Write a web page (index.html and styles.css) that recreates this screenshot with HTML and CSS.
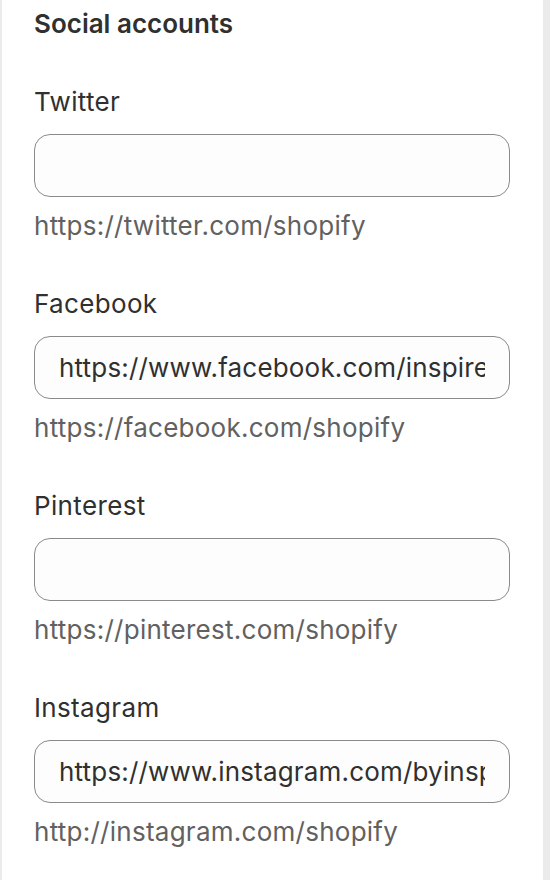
FILE: index.html
```html
<!DOCTYPE html>
<html lang="en">
<head>
<meta charset="utf-8">
<title>Social accounts</title>
<link rel="stylesheet" href="styles.css">
</head>
<body>
<div class="card">
  <h2 class="card-title">Social accounts</h2>
  <div class="fields">
    <div class="field">
      <label class="field-label" for="tw">Twitter</label>
      <input class="field-input" id="tw" type="text" value="">
      <div class="field-help">https://twitter.com/shopify</div>
    </div>
    <div class="field">
      <label class="field-label" for="fb">Facebook</label>
      <input class="field-input" id="fb" type="text" value="https://www.facebook.com/inspiredbyshopify">
      <div class="field-help">https://facebook.com/shopify</div>
    </div>
    <div class="field">
      <label class="field-label" for="pi">Pinterest</label>
      <input class="field-input" id="pi" type="text" value="">
      <div class="field-help">https://pinterest.com/shopify</div>
    </div>
    <div class="field">
      <label class="field-label" for="ig">Instagram</label>
      <input class="field-input" id="ig" type="text" value="https://www.instagram.com/byinspiredshopify">
      <div class="field-help">http://instagram.com/shopify</div>
    </div>
  </div>
</div>
</body>
</html>
```
FILE: styles.css
```css
html, body {
  margin: 0;
  padding: 0;
  background: #ebebeb;
  height: 100%;
}
body {
  font-family: Inter, "Noto Sans", sans-serif;
  color: #303030;
}
.card {
  margin-left: 2px;
  width: 541px;
  min-height: 880px;
  box-sizing: border-box;
  background: #ffffff;
  padding: 8px 33px 0 32px;
}
.card-title {
  margin: 0;
  font-size: 26px;
  font-weight: 600;
  line-height: 32px;
  height: 32px;
  margin-bottom: 42px;
}
.fields {
  display: flex;
  flex-direction: column;
  gap: 38px;
}
.field {
  display: flex;
  flex-direction: column;
}
.field-label {
  font-size: 26px;
  line-height: 40px;
  font-weight: 400;
  letter-spacing: 0.35px;
  margin-bottom: 12px;
}
.field-input {
  box-sizing: border-box;
  width: 100%;
  height: 63px;
  margin: 0;
  border: 1px solid #8a8a8a;
  border-radius: 16px;
  background: #fdfdfd;
  padding: 0 24px;
  font-family: Inter, "Noto Sans", sans-serif;
  font-size: 26px;
  letter-spacing: 0.18px;
  color: #303030;
  outline: none;
}
.field-help {
  margin-top: 9px;
  font-size: 26px;
  line-height: 40px;
  letter-spacing: 0.26px;
  color: #616161;
}
```
